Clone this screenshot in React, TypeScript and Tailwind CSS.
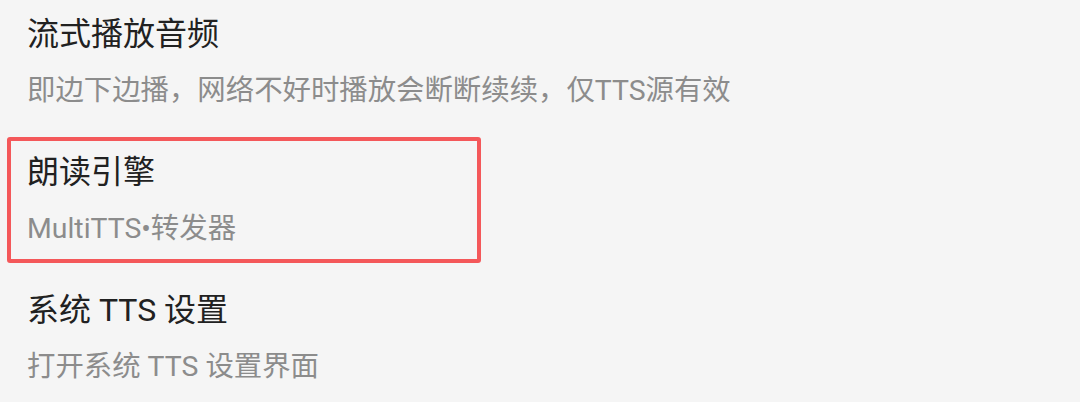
const font = { fontFamily: 'Roboto, "Noto Sans CJK SC", sans-serif' };

function Item({ title, summary }: { title: string; summary: string }) {
  return (
    <>
      <div className="text-[32px] leading-[40px] text-[#212121]">{title}</div>
      <div className="mt-[17px] text-[28.4px] leading-[40px] text-[#8c8c8c]">{summary}</div>
    </>
  );
}

export default function App() {
  return (
    <div className="w-[1080px] h-[402px] overflow-hidden bg-[#f5f5f5]" style={font}>
      <div className="pl-[27px] pt-[14px] pb-[20px]">
        <Item title="流式播放音频" summary="即边下边播，网络不好时播放会断断续续，仅TTS源有效" />
      </div>
      <div className="my-[6px] ml-[7px] w-[474px] rounded-[3px] border-4 border-[#f4585a] pl-[16px] pt-[11px] pb-[10px]">
        <Item title="朗读引擎" summary="MultiTTS•转发器" />
      </div>
      <div className="pl-[27px] pt-[21px] pb-[20px]">
        <Item title="系统 TTS 设置" summary="打开系统 TTS 设置界面" />
      </div>
    </div>
  );
}
